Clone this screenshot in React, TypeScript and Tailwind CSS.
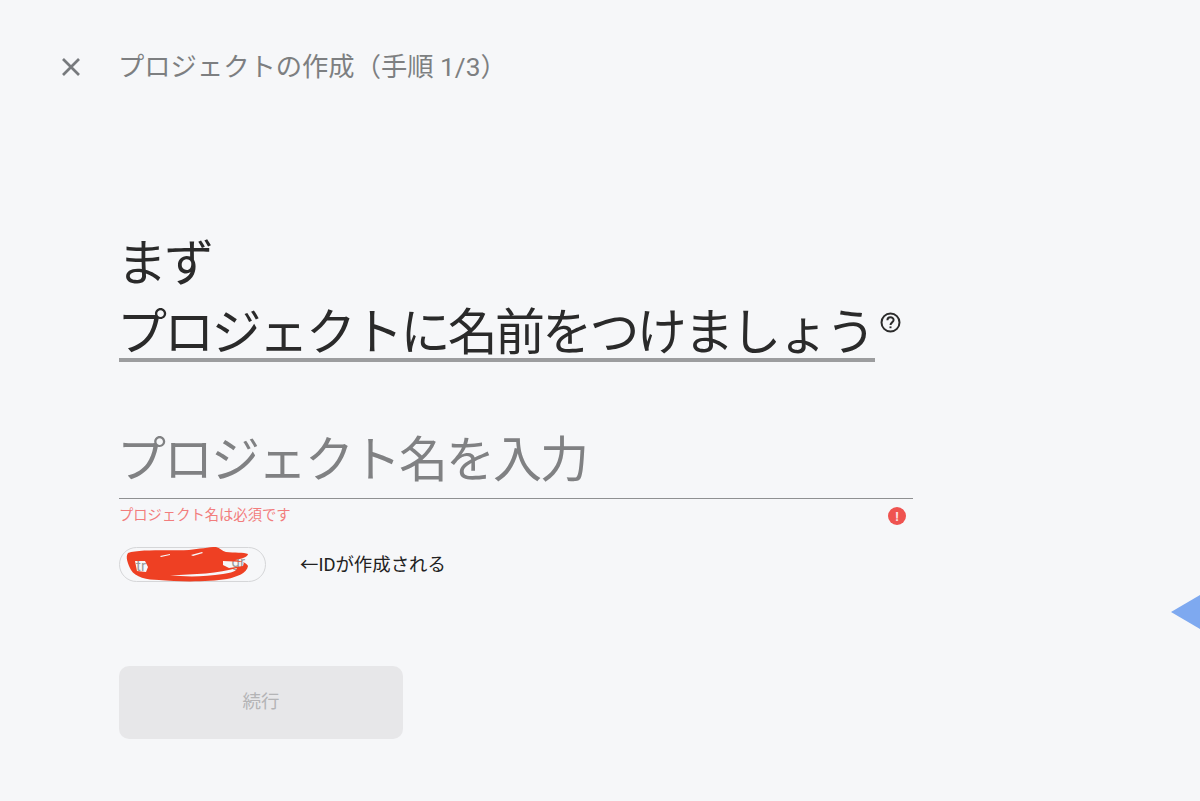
const jp = "font-['Roboto','Noto_Sans_CJK_JP',sans-serif]";

function ScribbleChip() {
  return (
    <div className="relative h-[35px] w-[147px] rounded-full border border-[#d5d6d8] pl-[16px] pt-[9px] text-[15px] leading-[18px] text-[#9a9a9a]">
      tr
      <span className="absolute right-[20px] top-[5px]">gr</span>
      <svg className="absolute -left-px -top-px" width="147" height="36" viewBox="0 0 147 36">
        <path
          fillRule="evenodd"
          fill="#ee4023"
          d="M9 6 C20 2 50 4 70 3 C80 2 90 0 97 0 C101 1 103 4 107 5 C115 6 125 5 129 7 C129 10 122 12 116 13 C122 14 128 16 129 19 C128 26 118 30 108 32 C90 35 60 35 40 33 C28 33 16 30 12 23 C9 17 6 10 9 6 Z
             M41 9 L51 7 L51 8 L42 10 Z
             M72 8 L83 5 L84 6 L74 9 Z
             M16 14 L26 14 L29 20 L27 25 L18 24 Z
             M51 28 C75 28 100 26 118 21 C118 24 112 26 104 27 C85 30 65 30 51 28 Z
             M104 14 L125 15 L124 19 L110 21 L104 18 Z"
        />
      </svg>
    </div>
  );
}

export default function App() {
  return (
    <main className={`relative h-[801px] w-[1200px] overflow-hidden bg-[#f6f7f9] ${jp}`}>
      <header className="flex h-[134px] items-center pl-[62px]">
        <svg width="18" height="18" viewBox="0 0 18 18" fill="none" stroke="#777a7d" strokeWidth="2.7">
          <path d="M1 1 L17 17 M17 1 L1 17" />
        </svg>
        <h1 className="ml-[38px] whitespace-nowrap text-[26.3px] leading-[36px] text-[#7d7f81]">プロジェクトの作成（手順 1/3）</h1>
      </header>

      <section className="pl-[119px]">
        <h2 className="mt-[95px] text-[50px] font-normal leading-[70px] tracking-[-2.75px] text-[#2a2a2a]">
          <div className="-ml-[2px]">まず</div>
          <div className="flex items-start">
            <span className="w-[756px] whitespace-nowrap border-b-[4px] border-[#9c9d9f] pt-[9px] indent-[-2px] leading-[50px]">プロジェクトに名前をつけましょう</span>
            <svg className="ml-[5px] mt-[13px]" width="21" height="21" viewBox="0 0 21 21" fill="none" stroke="#2b2b2b" strokeWidth="2">
              <circle cx="10.5" cy="10.5" r="9" />
              <path d="M7.4 8.2 C7.4 4.4 13.6 4.4 13.6 8 C13.6 10.4 10.5 10.4 10.5 13" />
              <path d="M10.5 14.4 V16.2" />
            </svg>
          </div>
        </h2>

        <div className="mt-[64px] w-[794px] border-b border-[#8f9092] pb-[2px] indent-[-2px] text-[49px] font-normal leading-[70px] tracking-[-2px] text-[#808183]">
          プロジェクト名を入力
        </div>
        <div className="mt-[5px] flex h-[22px] w-[794px] items-center justify-between">
          <span className="text-[14.3px] leading-[20px] text-[#f27d7d]">プロジェクト名は必須です</span>
          <span className="mr-[7px] mt-[2px] flex h-[18px] w-[18px] items-center justify-center rounded-full bg-[#ef5350] text-[13px] font-bold leading-none text-[#fbe3e3]">!</span>
        </div>

        <div className="mt-[21px] flex items-center">
          <ScribbleChip />
          <span className="ml-[34px] text-[18.4px] leading-[24px] text-[#222222]">←IDが作成される</span>
        </div>

        <button
          type="button"
          disabled
          className="mt-[84px] flex h-[73px] w-[284px] items-center justify-center rounded-[10px] bg-[#e7e7e9] text-[18.5px] text-[#b4b4b6]"
        >
          続行
        </button>
      </section>

      <svg className="absolute right-0 top-[594px]" width="29" height="36" viewBox="0 0 29 36">
        <path d="M0 18 L29 1 V35 Z" fill="#7ea9f0" />
      </svg>
    </main>
  );
}
